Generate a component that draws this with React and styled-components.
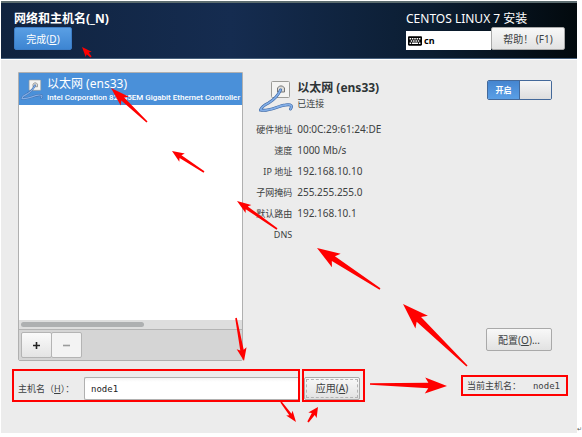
import React from "react";
import styled, { createGlobalStyle } from "styled-components";
import { FaKeyboard } from "react-icons/fa";

const details = [
  ["硬件地址", "00:0C:29:61:24:DE"],
  ["速度", "1000 Mb/s"],
  ["IP 地址", "192.168.10.10"],
  ["子网掩码", "255.255.255.0"],
  ["默认路由", "192.168.10.1"],
  ["DNS", ""],
];

// from = tail, to = tip
const arrows = [
  { from: [91, 57], to: [82, 47], head: 10, wide: 4 },
  { from: [147, 122], to: [111, 88], head: 19, wide: 6 },
  { from: [204, 172], to: [172, 151], head: 12, wide: 5 },
  { from: [277, 229], to: [237, 201], head: 14, wide: 5 },
  { from: [380, 289], to: [317, 248], head: 23, wide: 8 },
  { from: [467, 366], to: [403, 304], head: 26, wide: 9 },
  { from: [370, 384], to: [447, 386], head: 22, wide: 8 },
  { from: [236, 318], to: [244, 361], head: 13, wide: 5 },
  { from: [281, 402], to: [296, 422], head: 11, wide: 4 },
  { from: [308, 422], to: [318, 407], head: 10, wide: 5 },
];

const Arrow = ({ from, to, head, wide }) => {
  const dx = from[0] - to[0];
  const dy = from[1] - to[1];
  const len = Math.hypot(dx, dy);
  const angle = (Math.atan2(dy, dx) * 180) / Math.PI;
  const notch = head * 0.85;
  const neck = wide * 0.35;
  const points = [
    [0, 0], [head, -wide], [notch, -neck], [len, -0.8],
    [len, 0.8], [notch, neck], [head, wide],
  ];
  return (
    <polygon
      points={points.map((p) => p.join(",")).join(" ")}
      transform={`translate(${to[0]} ${to[1]}) rotate(${angle})`}
    />
  );
};

const EthernetIcon = ({ size }) => (
  <Icon width={size} height={size} viewBox="0 0 34 34" aria-hidden="true">
    <rect x="12.5" y="1.5" width="18" height="16" rx="1" fill="#f4f4f2" stroke="#9c9c98" />
    <path d="M18.5 12V8l2-2h3l2 2v4z" fill="#dcdcd8" stroke="#777" />
    <path
      d="M21.5 10c-3 7-7 10-12 13-4 2-7 4-8 7 8 2 17-4 25-5 6-1 7 1 5 4"
      fill="none" stroke="#3a66a5" strokeWidth="3" strokeLinecap="round"
    />
    <path
      d="M21.5 10c-3 7-7 10-12 13-4 2-7 4-8 7 8 2 17-4 25-5 6-1 7 1 5 4"
      fill="none" stroke="#83aee6" strokeWidth="1.8" strokeLinecap="round"
    />
  </Icon>
);

const App = () => (
  <>
    <GlobalStyle />
    <Window>
      <Header>
        <div>
          <Title>网络和主机名(_N)</Title>
          <DoneButton type="button">完成(<u>D</u>)</DoneButton>
        </div>
        <HeaderRight>
          <Product>CENTOS LINUX 7 安装</Product>
          <HeaderTools>
            <Layout><FaKeyboard size={14} /> cn</Layout>
            <HelpButton type="button">帮助！ (F1)</HelpButton>
          </HeaderTools>
        </HeaderRight>
      </Header>

      <Main>
        <Devices>
          <DeviceList>
            <Device>
              <EthernetIcon size={22} />
              <DeviceText>
                <DeviceName>以太网 (ens33)</DeviceName>
                <DeviceInfo>Intel Corporation 82545EM Gigabit Ethernet Controller</DeviceInfo>
              </DeviceText>
            </Device>
          </DeviceList>
          <ScrollBar><Thumb /></ScrollBar>
          <ListTools>
            <ToolButton type="button" aria-label="添加"><Sign viewBox="0 0 9 9"><path d="M4.5 1v7M1 4.5h7" /></Sign></ToolButton>
            <ToolButton type="button" aria-label="删除" $off><Sign viewBox="0 0 9 9"><path d="M1 4.5h7" /></Sign></ToolButton>
          </ListTools>
        </Devices>

        <Connection>
          <ConnectionHead>
            <EthernetIcon size={34} />
            <ConnectionText>
              <ConnectionName>以太网 (ens33)</ConnectionName>
              <Status>已连接</Status>
            </ConnectionText>
            <Switch>
              <input type="checkbox" role="switch" aria-label="开启" defaultChecked />
              <SwitchOn>开启</SwitchOn>
              <SwitchKnob />
            </Switch>
          </ConnectionHead>
          <Details>
            {details.map(([name, value]) => (
              <React.Fragment key={name}>
                <dt>{name}</dt>
                <dd>{value}</dd>
              </React.Fragment>
            ))}
          </Details>
          <ConfigureButton type="button">配置(<u>O</u>)...</ConfigureButton>
        </Connection>
      </Main>

      <Footer>
        <HostMark>
          <HostLabel htmlFor="hostname">主机名（<u>H</u>）：</HostLabel>
          <HostInput id="hostname" type="text" defaultValue="node1" />
        </HostMark>
        <ApplyMark>
          <ApplyButton type="button"><Focus>应用(<u>A</u>)</Focus></ApplyButton>
        </ApplyMark>
        <CurrentMark>
          <span>当前主机名：</span>
          <Mono>node1</Mono>
        </CurrentMark>
      </Footer>
    </Window>
    <ReturnMark>↵</ReturnMark>
    <Overlay width="582" height="437" aria-hidden="true">
      {arrows.map((a, i) => <Arrow key={i} {...a} />)}
    </Overlay>
  </>
);
export default App;

const GlobalStyle = createGlobalStyle`
  * {
    box-sizing: border-box;
  }
  body {
    margin: 0;
    background: #fff;
    color: #3c4142;
    font-family: "Noto Sans", "Noto Sans CJK SC", sans-serif;
    font-size: 10px;
    line-height: 14px;
  }
  button, input {
    font: inherit;
    color: inherit;
  }
`;
const Icon = styled.svg`
  flex: none;
`;
const Window = styled.div`
  margin: 1px 5px 4px 1px;
  background: #ececec;
`;
const Header = styled.header`
  display: flex;
  justify-content: space-between;
  padding: 8px 12px 8px 13px;
  border-top: 2px solid #5d6d70;
  border-bottom: 1px solid #47607c;
  background: linear-gradient(90deg, #10233f 0%, #152c50 40%, #0b1d31 75%, #02090d 100%);
  color: #fff;
`;
const Title = styled.h1`
  margin: 0;
  font-size: 12px;
  line-height: 16px;
  font-weight: bold;
`;
const Button = styled.button`
  height: 23px;
  padding: 0;
  border: 1px solid #a9a9a9;
  border-radius: 2px;
  background: linear-gradient(#f8f8f8, #e2e2e2);
  font-size: 10px;
  white-space: nowrap;
`;
const DoneButton = styled(Button)`
  width: 58px;
  border-color: #3c7dc6;
  background: linear-gradient(#5a9fe4, #3d85d2);
  color: #fff;
`;
const HeaderRight = styled.div`
  width: 159px;
`;
const Product = styled.div`
  font-size: 12px;
  line-height: 16px;
`;
const HeaderTools = styled.div`
  display: flex;
  align-items: flex-end;
`;
const Layout = styled.div`
  flex: 1;
  display: flex;
  align-items: center;
  gap: 2px;
  height: 19px;
  padding-left: 2px;
  background: #fff;
  color: #000;
  font-size: 9px;
  font-weight: bold;
`;
const HelpButton = styled(Button)`
  width: 74px;
  color: #3c4142;
`;
const Main = styled.main`
  display: flex;
  gap: 12px;
  padding: 12px 15px 8px 17px;
  border-top: 1px solid #fff;
`;
const Devices = styled.section`
  flex: 0 0 41.4%;
  min-width: 0;
  display: flex;
  flex-direction: column;
  border: 1px solid #b0b0b0;
  border-radius: 0 0 2px 2px;
`;
const DeviceList = styled.ul`
  flex: 1;
  margin: 0;
  padding: 0;
  overflow: hidden;
  list-style: none;
  background: #fff;
`;
const Device = styled.li`
  display: flex;
  align-items: center;
  gap: 4px;
  padding: 3px 0 2px 2px;
  background: #4a90d9;
  color: #fff;
  white-space: nowrap;
`;
const DeviceText = styled.div`
  display: flex;
  flex-direction: column;
`;
const DeviceName = styled.span`
  font-size: 12px;
  line-height: 16px;
`;
const DeviceInfo = styled.span`
  font-family: Roboto, "Noto Sans", sans-serif;
  font-size: 8px;
  line-height: 11px;
  font-weight: 500;
`;
const ScrollBar = styled.div`
  padding: 2px;
  background: #dedede;
  border-bottom: 1px solid #b4b4b4;
`;
const Thumb = styled.div`
  width: 56%;
  height: 5px;
  border-radius: 3px;
  background: #aeb0b1;
`;
const ListTools = styled.div`
  display: flex;
  padding: 2px;
  background: #d5d5d5;
`;
const ToolButton = styled(Button)`
  display: grid;
  place-items: center;
  width: 31px;
  height: 26px;
  border-color: #b4b4b4;
  background: ${(p) => (p.$off ? "#f3f3f3" : "linear-gradient(#fafafa, #e4e4e4)")};
  color: ${(p) => (p.$off ? "#9a9c9c" : "#222")};
  & + & {
    margin-left: -1px;
  }
`;
const Sign = styled.svg`
  width: 9px;
  height: 9px;
  fill: none;
  stroke: currentColor;
  stroke-width: 1.6;
`;
const Connection = styled.section`
  flex: 1;
  min-width: 0;
  display: flex;
  flex-direction: column;
`;
const ConnectionHead = styled.div`
  display: flex;
  gap: 4px;
  padding: 8px 10px 5px 4px;
`;
const ConnectionText = styled.div`
  flex: 1;
`;
const ConnectionName = styled.h2`
  margin: 0;
  font-size: 12px;
  line-height: 16px;
  color: #2e3436;
`;
const Status = styled.div`
  font-size: 9px;
  line-height: 16px;
`;
const Switch = styled.label`
  position: relative;
  display: flex;
  width: 65px;
  height: 20px;
  border: 1px solid #44699a;
  border-radius: 2px;
  overflow: hidden;
  input {
    position: absolute;
    inset: 0;
    margin: 0;
    opacity: 0;
  }
`;
const SwitchOn = styled.span`
  flex: 1;
  background: linear-gradient(#4585d0, #5a9fe6);
  color: #fff;
  font-size: 8px;
  font-weight: bold;
  line-height: 18px;
  text-align: center;
`;
const SwitchKnob = styled.span`
  flex: 1;
  border-left: 1px solid #44699a;
  background: linear-gradient(#f6f6f6, #dedede);
`;
const Details = styled.dl`
  display: grid;
  grid-template-columns: 37px 1fr;
  column-gap: 5px;
  margin: 0 0 83px;
  line-height: 21px;
  dt {
    font-size: 9px;
    text-align: right;
    white-space: nowrap;
  }
  dd {
    margin: 0;
  }
`;
const ConfigureButton = styled(Button)`
  align-self: flex-end;
  width: 66px;
  margin: 0 10px 10px 0;
`;
const Footer = styled.footer`
  display: flex;
  align-items: center;
  padding: 0 9px 31px 11px;
`;
const Mark = styled.div`
  display: flex;
  align-items: center;
  border: 2px solid #f00;
`;
const HostMark = styled(Mark)`
  flex: 0 1 288px;
  height: 33px;
  padding: 6px 0 0 4px;
`;
const HostLabel = styled.label`
  flex: 0 0 66px;
  font-size: 9px;
  white-space: nowrap;
`;
const Mono = styled.span`
  font-family: "DejaVu Sans Mono", monospace;
  font-size: 9px;
`;
const HostInput = styled.input`
  flex: 1;
  min-width: 0;
  height: 23px;
  padding: 0 6px;
  border: 1px solid #b0b0b0;
  border-right: 0;
  border-radius: 2px 0 0 2px;
  background: linear-gradient(#f4f4f4, #fff 4px);
  color: #222;
  font-family: "DejaVu Sans Mono", monospace;
  font-size: 9px;
`;
const ApplyMark = styled(Mark)`
  width: 63px;
  height: 33px;
  margin-left: 2px;
  padding-top: 6px;
`;
const ApplyButton = styled(Button)`
  width: 56px;
  padding: 1px;
`;
const Focus = styled.span`
  display: block;
  border: 1px dashed #b4b4b4;
  line-height: 17px;
`;
const CurrentMark = styled(Mark)`
  justify-content: space-between;
  width: 107px;
  height: 21px;
  margin-left: auto;
  padding: 0 6px 0 4px;
  font-size: 9px;
  white-space: nowrap;
`;
const ReturnMark = styled.span`
  position: absolute;
  right: 0;
  bottom: 1px;
  font-family: "DejaVu Sans", sans-serif;
  font-size: 6px;
  color: #555;
`;
const Overlay = styled.svg`
  position: absolute;
  top: 0;
  left: 0;
  fill: #f00;
  pointer-events: none;
`;
